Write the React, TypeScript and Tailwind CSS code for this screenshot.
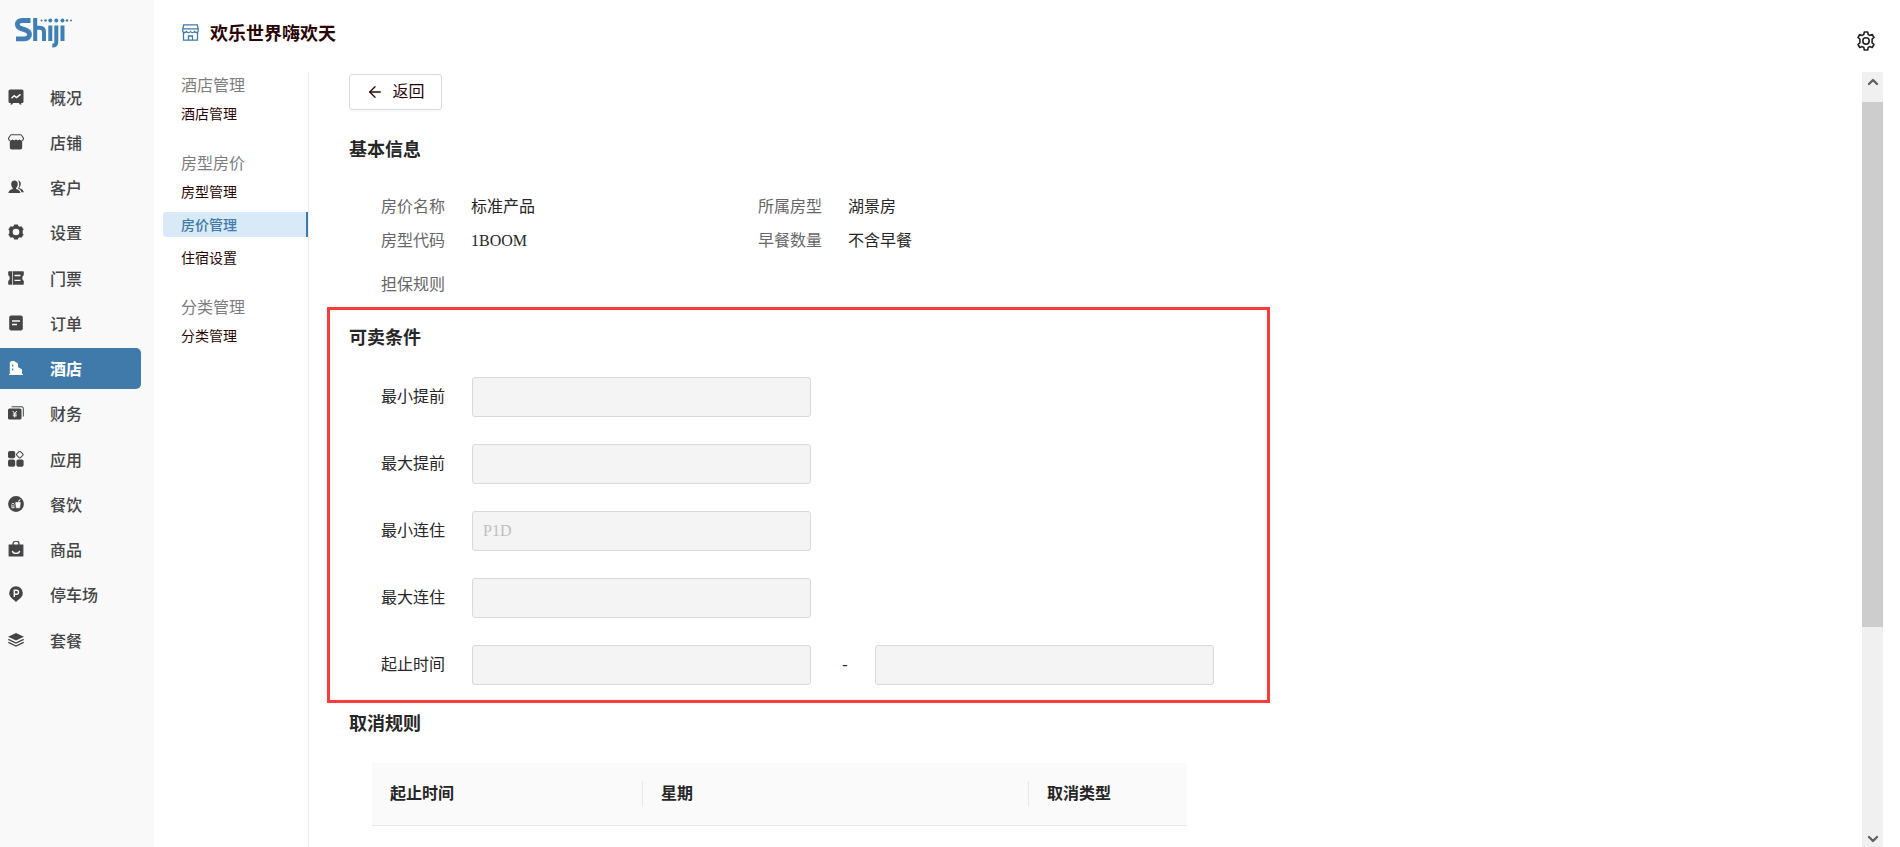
import type { ReactNode } from "react";
import { ArrowLeft, ChevronDown, ChevronUp } from "lucide-react";

const menu: { label: string; icon: ReactNode; active?: boolean }[] = [
  {
    label: "概况",
    icon: (
      <>
        <path d="M2 .5h12a1.500 1.500 0 0 1 1.500 1.500v10.500A1.500 1.500 0 0 1 14 14h-1l.7 1.500h-2L11 14H5l-.7 1.500h-2L3 14H2a1.500 1.500 0 0 1-1.500-1.500V2A1.500 1.500 0 0 1 2 .5z" />
        <path d="M3.500 9.200 6.200 6.800l2.300 1.700 4-3.200" fill="none" stroke="#f9f9f9" strokeWidth="1.500" />
      </>
    ),
  },
  {
    label: "店铺",
    icon: (
      <>
        <path d="M2 6.500C.5 6 .3 4.800.8 3.800L2.300 1.500C2.600 1 3 .8 3.500.8h9c.5 0 .9.200 1.200.7l1.500 2.300c.5 1 .3 2.200-1.200 2.700" fill="none" stroke="currentColor" strokeWidth="1.100" />
        <path d="M1.800 7.500V6.500c1.200 0 2-.3 2.700-1.300.9 1.400 2.600 1.400 3.500 0 .9 1.400 2.600 1.400 3.500 0 .7 1 1.500 1.300 2.700 1.300v7a2 2 0 0 1-2 2H3.800a2 2 0 0 1-2-2z" />
      </>
    ),
  },
  {
    label: "客户",
    icon: (
      <>
        <path d="M6.500 1.500c2 0 3.300 1.400 3.300 3.600 0 1.700-.8 3.100-1.700 3.800v1c2 .7 4 1.400 4.400 4.100H.3c.4-2.700 2.400-3.400 4.400-4.100v-1C3.800 8.200 3.200 6.800 3.200 5.100c0-2.200 1.300-3.600 3.300-3.600z" />
        <path d="M10 1.500c1.800.1 2.800 1.400 2.800 3.300 0 1.500-.6 2.700-1.400 3.400v1c2 .8 4 1.500 4.400 4h-2.300c-.5-2-2-3-3.600-3.700.8-1 1.300-2.400 1.300-4 0-1.600-.4-3-1.200-4z" />
      </>
    ),
  },
  {
    label: "设置",
    icon: (
      <path
        fillRule="evenodd"
        d="M6.200.5h3.600l.6 1.600 1.200.6 1.800-.5 2.200 3-.9 1.500v2.600l.9 1.500-2.200 3-1.800-.5-1.200.6-.6 1.600H6.200l-.6-1.600-1.200-.6-1.800.5-2.200-3 .9-1.500V6.700l-.9-1.500 2.200-3 1.800.5 1.200-.6zM8 4.700a3.300 3.300 0 1 0 0 6.600 3.300 3.300 0 0 0 0-6.600z"
      />
    ),
  },
  {
    label: "门票",
    icon: (
      <>
        <path d="M1 1.200h14a.8.8 0 0 1 .8.800v3.200c-2 .8-2 4.800 0 5.600V14a.8.8 0 0 1-.8.800H1a.8.8 0 0 1-.8-.8v-3.200c2-.8 2-4.800 0-5.600V2A.8.8 0 0 1 1 1.200z" />
        <path d="M4.500 1.200v13.600" stroke="#f9f9f9" strokeWidth=".7" />
        <path d="M6.500 5.500h6M6.500 10.300h6" stroke="#f9f9f9" strokeWidth="1.300" />
      </>
    ),
  },
  {
    label: "订单",
    icon: (
      <>
        <rect x="1.200" y=".5" width="13.600" height="15" rx="2" />
        <path d="M4 6h8M4 9.500h5" stroke="#f9f9f9" strokeWidth="1.400" />
      </>
    ),
  },
  {
    label: "酒店",
    active: true,
    icon: (
      <>
        <path d="M1.800 14V2.500L3.300 1H6l4 2.500V7l4 2.500V14h1v1H1v-1z" />
        <path d="M4.700 4.500v2M4.700 8.500v2" stroke="#3f7aab" strokeWidth="1.200" />
      </>
    ),
  },
  {
    label: "财务",
    icon: (
      <>
        <path d="M3.500 1.800H14a1.300 1.300 0 0 1 1.300 1.300v8.400" fill="none" stroke="currentColor" />
        <rect x="0" y="3.500" width="13.500" height="11" rx="1.500" />
        <path d="M4.800 6 6.800 8.500 8.800 6M6.800 8.500v4M4.800 9h4M4.800 10.800h4" fill="none" stroke="#f9f9f9" />
      </>
    ),
  },
  {
    label: "应用",
    icon: (
      <>
        <rect x="0" y="0" width="7.200" height="7.200" rx="1.800" />
        <rect x="0" y="8.600" width="7.200" height="7.200" rx="1.800" />
        <rect x="8.400" y="8.600" width="7.200" height="7.200" rx="1.800" />
        <rect x="9.200" y="1" width="5.200" height="5.200" rx="1" fill="none" stroke="currentColor" transform="rotate(45 11.800 3.600)" />
      </>
    ),
  },
  {
    label: "餐饮",
    icon: (
      <>
        <circle cx="8" cy="8" r="7.900" />
        <path d="M7.700 6.500h4.600l-.6 5.300H8.300zM10.500 6l.6-2 1.400-.3" fill="#f9f9f9" stroke="#f9f9f9" strokeWidth=".7" />
        <path d="M3.500 8.300c.4-1 2.600-1 3 0M3 10h3.600M3.500 11.700h3" fill="none" stroke="#f9f9f9" />
      </>
    ),
  },
  {
    label: "商品",
    icon: (
      <>
        <path d="M5 4V3a3 3 0 0 1 6 0v1" fill="none" stroke="currentColor" strokeWidth="1.300" />
        <path d="M.6 3.500h14.800v12H.6z" />
        <path d="M4.300 10c1 3.200 6.400 3.200 7.400 0" fill="none" stroke="#f9f9f9" strokeWidth="1.400" />
      </>
    ),
  },
  {
    label: "停车场",
    icon: (
      <>
        <path d="M8 .3a6.800 6.800 0 0 1 6.800 6.800c0 3.600-3 6-5 7.200L8 16l-1.800-1.700c-2-1.200-5-3.600-5-7.200A6.800 6.800 0 0 1 8 .3z" />
        <path d="M6.300 11V4.300h2.200a2 2 0 0 1 0 4H6.300" fill="none" stroke="#f9f9f9" strokeWidth="1.400" />
      </>
    ),
  },
  {
    label: "套餐",
    icon: (
      <>
        <path d="M8 1 16 4.800 8 8.600 0 4.800z" />
        <path d="M.3 7.300 8 11l7.700-3.700M.3 10.300 8 14l7.700-3.700" fill="none" stroke="currentColor" strokeWidth="1.300" />
      </>
    ),
  },
];

const subMenu = [
  { title: "酒店管理", items: ["酒店管理"] },
  { title: "房型房价", items: ["房型管理", "房价管理", "住宿设置"] },
  { title: "分类管理", items: ["分类管理"] },
];

const limits = [
  { id: "min-advance", label: "最小提前", placeholder: "" },
  { id: "max-advance", label: "最大提前", placeholder: "" },
  { id: "min-stay", label: "最小连住", placeholder: "P1D" },
  { id: "max-stay", label: "最大连住", placeholder: "" },
];

export default function App() {
  return (
    <div className="flex h-screen overflow-hidden bg-white font-['Noto_Sans_CJK_SC',sans-serif] text-base leading-6 text-[#262626]">
      <aside className="w-[154px] shrink-0 bg-[#f9f9f9]">
        <div className="flex h-[76px] items-start pt-4 pl-[14px]">
          <Logo />
        </div>
        <nav className="flex h-[584px] flex-col justify-between pr-[13px]">
          {menu.map((item) => (
            <a
              key={item.label}
              href="#"
              className={
                item.active
                  ? "flex h-[41px] items-center gap-[26px] rounded-r-[5px] bg-[#3f7aab] pl-2 font-bold text-white"
                  : "flex h-[41px] items-center gap-[26px] pl-2 font-medium text-[#444547]"
              }
            >
              <svg className="h-4 w-4 shrink-0" viewBox="0 0 16 16" fill="currentColor">
                {item.icon}
              </svg>
              {item.label}
            </a>
          ))}
        </nav>
      </aside>

      <div className="flex min-w-0 flex-1 flex-col">
        <header className="flex h-[72px] shrink-0 items-start justify-between pr-6 pl-7">
          <div className="flex h-16 items-center gap-[11px]">
            <StoreIcon />
            <h1 className="text-lg font-bold text-[#2b0505]">欢乐世界嗨欢天</h1>
          </div>
          <button aria-label="系统设置" className="mt-[31px]">
            <GearIcon />
          </button>
        </header>

        <div className="flex min-h-0 flex-1">
          <nav className="flex w-[155px] shrink-0 flex-col gap-6 border-r border-[#ebebeb] pl-[9px]">
            {subMenu.map((group) => (
              <div key={group.title}>
                <h2 className="mb-[5px] pl-[18px] text-[#7d7d7d]">{group.title}</h2>
                <div className="flex flex-col gap-2">
                  {group.items.map((name) => (
                    <a
                      key={name}
                      href="#"
                      className={
                        name === "房价管理"
                          ? "h-[25px] rounded-l-[3px] border-r-2 border-[#3f7aab] bg-[#d8e9f7] pl-[18px] text-sm leading-[25px] font-medium text-[#3f7aab]"
                          : "h-[25px] pl-[18px] text-sm leading-[25px] text-[#2b0505]"
                      }
                    >
                      {name}
                    </a>
                  ))}
                </div>
              </div>
            ))}
          </nav>

          <main className="min-w-0 flex-1 overflow-hidden pt-[2px] pl-[18px] font-['Liberation_Serif','Noto_Sans_CJK_SC',serif]">
            <section className="h-[233px] pl-[22px]">
              <button className="flex h-9 w-[93px] items-center justify-center gap-2 rounded-[3px] border border-[#d9d9d9] text-[#2b0505] shadow-[0_2px_0_rgba(0,0,0,0.02)]">
                <ArrowLeft size={18} strokeWidth={1.700} />
                返回
              </button>
              <h2 className="mt-7 text-lg leading-6 font-bold">基本信息</h2>
              <dl className="mt-[33px] grid grid-cols-[377px_auto] justify-start gap-y-[10px] pl-8">
                <Info label="房价名称" value="标准产品" />
                <Info label="所属房型" value="湖景房" />
                <Info label="房型代码" value="1BOOM" />
                <Info label="早餐数量" value="不含早餐" />
              </dl>
              <dl className="mt-5 pl-8">
                <Info label="担保规则" value="" />
              </dl>
            </section>

            <section className="max-w-[943px] border-[3px] border-[#ff3a3a] pt-4 pb-[15px] pl-[19px]">
              <h2 className="text-lg leading-6 font-bold">可卖条件</h2>
              <div className="mt-[27px] flex flex-col gap-[27px] pl-8">
                {limits.map((field) => (
                  <div key={field.id} className="flex items-center">
                    <label htmlFor={field.id} className="w-[91px]">{field.label}</label>
                    <Field id={field.id} placeholder={field.placeholder} />
                  </div>
                ))}
                <div className="flex items-center">
                  <label htmlFor="start-time" className="w-[91px]">起止时间</label>
                  <Field id="start-time" />
                  <span className="w-16 pl-1 text-center">-</span>
                  <Field id="end-time" label="结束时间" />
                </div>
              </div>
            </section>

            <section className="pt-[9px] pl-[22px]">
              <h2 className="text-lg leading-6 font-bold">取消规则</h2>
              <table className="mt-[27px] ml-[23px] w-full max-w-[815px] table-fixed bg-[#fafafa] text-left">
                <thead>
                  <tr className="h-[62px] border-b border-[#e8e8e8]">
                    <th className="w-[271px] font-bold">
                      <div className="border-r border-[#e8e8e8] pl-[18px] leading-[26px]">起止时间</div>
                    </th>
                    <th className="w-[386px] font-bold">
                      <div className="border-r border-[#e8e8e8] pl-[18px] leading-[26px]">星期</div>
                    </th>
                    <th className="pl-[18px] font-bold">取消类型</th>
                  </tr>
                </thead>
              </table>
            </section>
          </main>

          <div className="mr-[17px] flex w-[21px] shrink-0 flex-col items-center bg-[#f0f0f0] text-[#606060]">
            <div className="flex h-[30px] items-start pt-[2px]">
              <ChevronUp size={16} strokeWidth={3.500} />
            </div>
            <div className="h-[525px] w-full bg-[#cdcdcd]" />
            <div className="mt-auto">
              <ChevronDown size={16} strokeWidth={3.500} />
            </div>
          </div>
        </div>
      </div>
    </div>
  );
}

function Info({ label, value }: { label: string; value: string }) {
  return (
    <div className="flex">
      <dt className="w-[90px] text-[#666666]">{label}</dt>
      <dd>{value}</dd>
    </div>
  );
}

function Field({ id, label, placeholder }: { id: string; label?: string; placeholder?: string }) {
  return (
    <input
      id={id}
      aria-label={label}
      placeholder={placeholder}
      disabled
      className="h-10 w-[339px] rounded-[3px] border border-[#d9d9d9] bg-[#f4f4f4] px-[10px] placeholder:text-[#bfbfbf]"
    />
  );
}

function Logo() {
  return (
    <svg className="h-8 w-[60px]" viewBox="0 0 60 32" fill="none" stroke="#3f7fb5" strokeWidth="4">
      <path d="M16.500 4.500H8C5 4.500 3.300 6 3.300 8.300s1.500 3.500 4 4.300l4 1.300c2.800.9 4.200 2.300 4.200 4.600s-1.800 4.300-5 4.300H2" strokeWidth="4.800" />
      <path d="M21.200 2v23M21.200 11.800h4.500c3 0 4.300 1.200 4.300 4.200v9" />
      <path d="M36.300 9.500V25M42.300 9.500V26c0 2.500-1 3.500-4 3.500M48.500 9.500V25" />
      <g fill="#3f7fb5" stroke="none">
        <circle cx="27.500" cy="4.500" r="1" />
        <circle cx="31.500" cy="4.500" r="1.300" />
        <circle cx="36.300" cy="4.500" r="2" />
        <circle cx="42.300" cy="4.500" r="2" />
        <circle cx="48.500" cy="4.500" r="2" />
        <circle cx="53" cy="4.500" r="1.300" />
        <circle cx="57" cy="4.500" r="1" />
      </g>
    </svg>
  );
}

function StoreIcon() {
  return (
    <svg className="h-[17px] w-[17px]" viewBox="0 0 17 17" fill="none" stroke="#3f7aab" strokeWidth="1.300">
      <path d="M1.700.8h13.600l.9 4.200v2.200c0 1.600-2.600 1.800-3.800.3-1 1.500-2.900 1.500-3.900 0-1 1.500-2.900 1.500-3.900 0C3.400 9 .8 8.800.8 7.200V5z" />
      <path d="M.8 4.800h15.400M1.500 8.800v7.400h14V8.800M6.500 16v-4h4v4" />
    </svg>
  );
}

function GearIcon() {
  return (
    <svg className="h-5 w-5" viewBox="0 0 20 20" fill="none" stroke="#222222" strokeWidth="1.600" strokeLinejoin="round">
      <path d="M8.300 1h3.400l.5 2.500 1.600.9 2.400-.9 1.800 3-1.900 1.700v3.600l1.900 1.700-1.800 3-2.400-.9-1.600.9-.5 2.500H8.300l-.5-2.500-1.600-.9-2.400.9-1.800-3 1.900-1.700V8.200L2 6.500l1.800-3 2.400.9 1.600-.9z" />
      <circle cx="10" cy="10" r="3.200" />
    </svg>
  );
}
